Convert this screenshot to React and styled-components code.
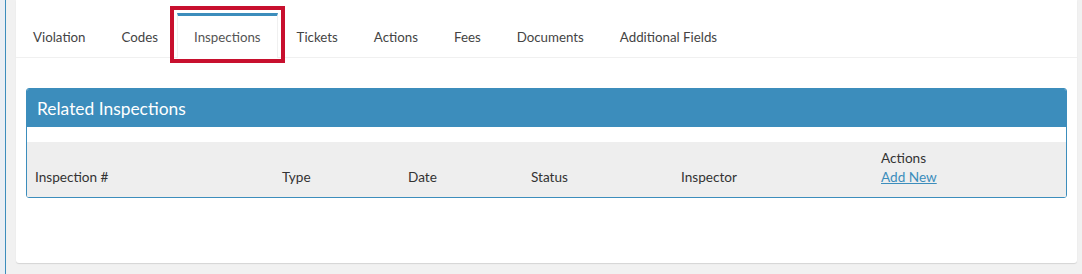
import React from "react";
import styled, { createGlobalStyle } from "styled-components";

const GlobalStyle = createGlobalStyle`
  html, body {
    margin: 0;
    padding: 0;
    background: #f1f1f1;
    font-family: Lato, "Liberation Sans", sans-serif;
    font-size: 13.6px;
    color: #444;
  }
`;

const Page = styled.div`
  display: flex;
  height: 274px;
  overflow: hidden;
`;

const SideStrip = styled.div`
  flex: 0 0 5px;
  background: #e9eef4;
  border-right: 1px solid #3c8dbc;
`;

const Main = styled.div`
  flex: 1;
  padding: 0 5px 11px 10px;
  display: flex;
`;

const Card = styled.div`
  flex: 1;
  background: #fff;
  border-radius: 0 0 3px 3px;
  box-shadow: 0 1px 1px rgba(0, 0, 0, 0.12);
  padding-top: 13px;
`;

const TabList = styled.ul`
  display: flex;
  list-style: none;
  margin: 0;
  padding: 0;
  border-bottom: 1px solid #f0f0f0;
`;

const Tab = styled.li`
  position: relative;
  margin-right: 2px;
  margin-bottom: -1px;
  padding: 1px 16px 0;
  height: 40px;
  line-height: 40px;
  font-size: 13.3px;
  color: #444;
  white-space: nowrap;
  border: 1px solid transparent;
  border-top: 3px solid transparent;
  border-bottom: none;

  ${({ $active }) =>
    $active &&
    `
    background: #fff;
    border-color: #f0f0f0;
    border-top-color: #3c8dbc;
    color: #555;
    padding-bottom: 1px;

    &::after {
      content: "";
      position: absolute;
      top: -10px;
      left: -8px;
      right: -8px;
      bottom: -5px;
      border: 4px solid #c8102e;
    }
  `}
`;

const Content = styled.div`
  padding: 30px 10px 0;
`;

const Panel = styled.div`
  border: 1px solid #3c8dbc;
  border-radius: 3px;
  overflow: hidden;
`;

const PanelHeader = styled.div`
  background: #3c8dbc;
  color: #fff;
  height: 38px;
  display: flex;
  align-items: center;
  padding: 0 10px;
  font-size: 17.4px;
`;

const PanelBody = styled.div`
  padding-top: 15px;
  background: #fff;
`;

const Table = styled.table`
  width: 100%;
  border-collapse: collapse;
  table-layout: fixed;
`;

const Th = styled.th`
  box-sizing: border-box;
  width: ${({ $w }) => ($w ? `${$w}px` : "auto")};
  background: #eeeeee;
  text-align: left;
  font-weight: normal;
  color: #333;
  vertical-align: bottom;
  line-height: 19px;
  padding: 7px 8px 10px;
`;

const Link = styled.a`
  color: #3c8dbc;
  text-decoration: underline;
  cursor: pointer;
`;

const tabs = [
  "Violation",
  "Codes",
  "Inspections",
  "Tickets",
  "Actions",
  "Fees",
  "Documents",
  "Additional Fields",
];

const columns = [
  { label: "Inspection #", w: 247 },
  { label: "Type", w: 126 },
  { label: "Date", w: 123 },
  { label: "Status", w: 150 },
  { label: "Inspector", w: 200 },
];

export default function App() {
  return (
    <>
      <GlobalStyle />
      <Page>
        <SideStrip />
        <Main>
          <Card>
            <TabList>
              {tabs.map((t) => (
                <Tab key={t} $active={t === "Inspections"}>
                  {t}
                </Tab>
              ))}
            </TabList>
            <Content>
              <Panel>
                <PanelHeader>Related Inspections</PanelHeader>
                <PanelBody>
                  <Table>
                    <thead>
                      <tr>
                        {columns.map((c) => (
                          <Th key={c.label} $w={c.w}>
                            {c.label}
                          </Th>
                        ))}
                        <Th>
                          Actions
                          <br />
                          <Link>Add New</Link>
                        </Th>
                      </tr>
                    </thead>
                  </Table>
                </PanelBody>
              </Panel>
            </Content>
          </Card>
        </Main>
      </Page>
    </>
  );
}
